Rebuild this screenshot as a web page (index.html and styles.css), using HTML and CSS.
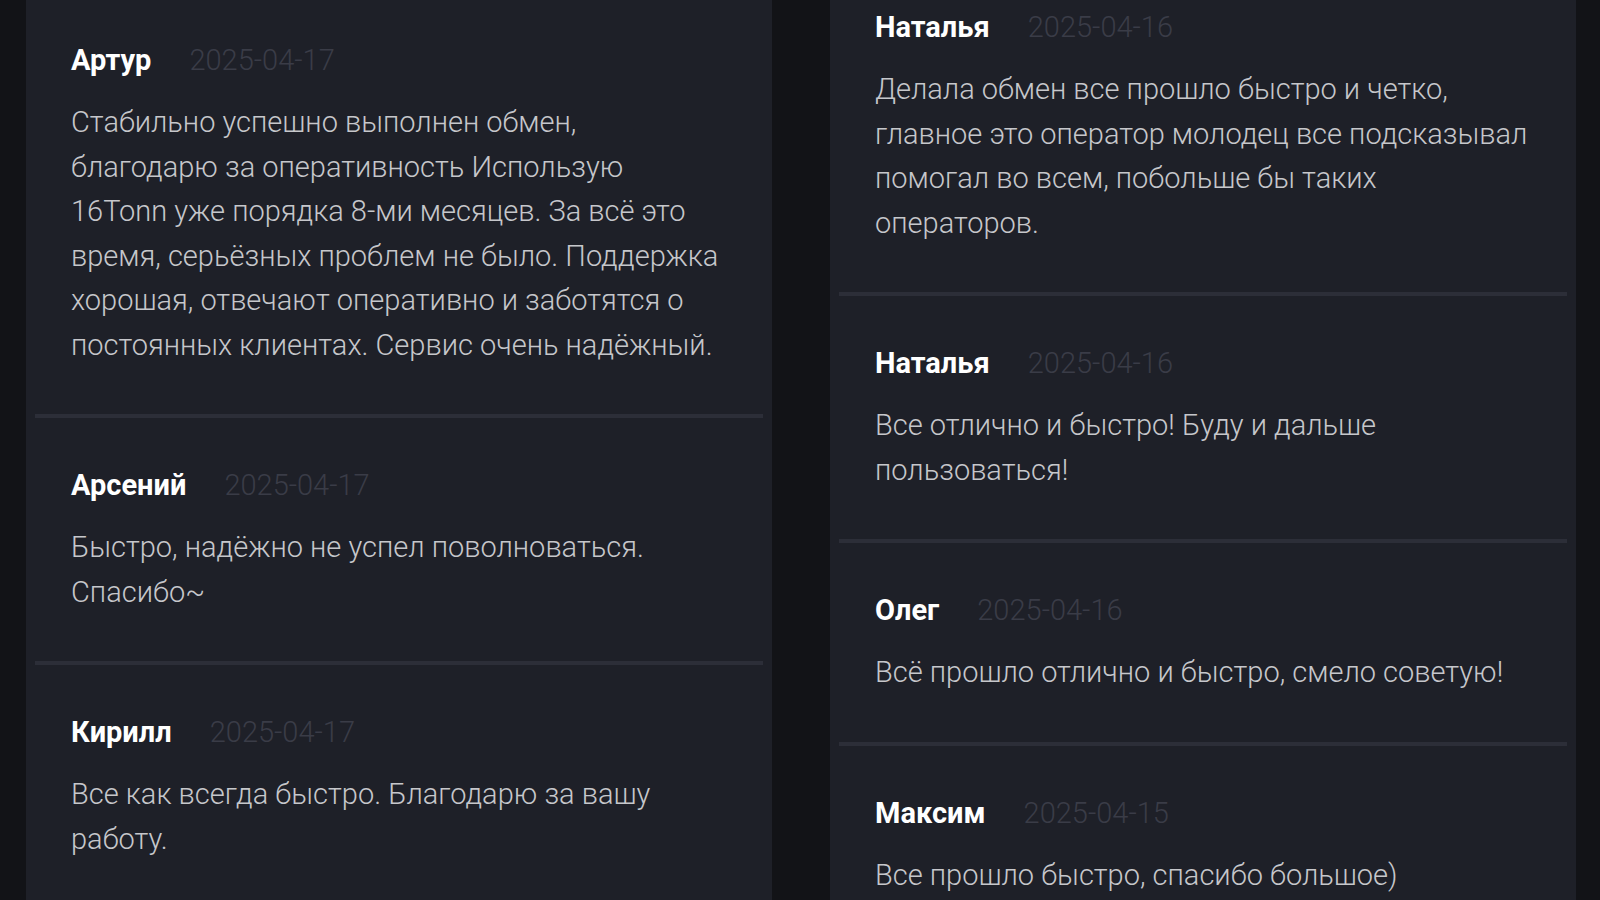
FILE: index.html
```html
<!DOCTYPE html>
<html lang="ru">
<head>
  <meta charset="UTF-8" />
  <meta name="viewport" content="width=device-width, initial-scale=1.0" />
  <title>Отзывы</title>
  <link rel="stylesheet" href="styles.css">
</head>
<body>
  <div class="reviews">
    <div class="column">
      <div class="list list-left">
        <div class="review">
          <div class="head"><span class="name">Артур</span><span class="date">2025-04-17</span></div>
          <p class="text">Стабильно успешно выполнен обмен, благодарю за оперативность Использую 16Tonn уже порядка 8-ми месяцев. За всё это время, серьёзных проблем не было. Поддержка хорошая, отвечают оперативно и заботятся о постоянных клиентах. Сервис очень надёжный.</p>
        </div>
        <div class="review">
          <div class="head"><span class="name">Арсений</span><span class="date">2025-04-17</span></div>
          <p class="text">Быстро, надёжно не успел поволноваться. Спасибо~</p>
        </div>
        <div class="review">
          <div class="head"><span class="name">Кирилл</span><span class="date">2025-04-17</span></div>
          <p class="text">Все как всегда быстро. Благодарю за вашу работу.</p>
        </div>
      </div>
    </div>
    <div class="column">
      <div class="list list-right">
        <div class="review">
          <div class="head"><span class="name">Наталья</span><span class="date">2025-04-16</span></div>
          <p class="text">Делала обмен все прошло быстро и четко, главное это оператор молодец все подсказывал помогал во всем, побольше бы таких операторов.</p>
        </div>
        <div class="review">
          <div class="head"><span class="name">Наталья</span><span class="date">2025-04-16</span></div>
          <p class="text">Все отлично и быстро! Буду и дальше пользоваться!</p>
        </div>
        <div class="review">
          <div class="head"><span class="name">Олег</span><span class="date">2025-04-16</span></div>
          <p class="text">Всё прошло отлично и быстро, смело советую!</p>
        </div>
        <div class="review">
          <div class="head"><span class="name">Максим</span><span class="date">2025-04-15</span></div>
          <p class="text">Все прошло быстро, спасибо большое)</p>
        </div>
      </div>
    </div>
  </div>
</body>
</html>
```

FILE: styles.css
```css
html, body {
  height: 100%;
}
body {
  margin: 0;
  background: #121317;
  font-family: 'Roboto', 'Liberation Sans', sans-serif;
  overflow: hidden;
}
.reviews {
  display: grid;
  grid-template-columns: 746px 746px;
  column-gap: 58px;
  padding: 0 24px 0 26px;
  height: 100%;
}
.column {
  background: #1e2028;
  padding: 0 9px;
  overflow: hidden;
}
.list-left {
  margin-top: -7px;
}
.list-right {
  margin-top: -40px;
}
.review {
  padding: 45px 39px 47px 36px;
  border-bottom: 4px solid #2c2e38;
}
.head {
  display: flex;
  align-items: center;
  height: 44px;
  margin-bottom: 18px;
}
.name {
  font-size: 29px;
  font-weight: 700;
  color: #ffffff;
}
.date {
  margin-left: 38px;
  font-size: 29px;
  font-weight: 300;
  color: #3a3c47;
}
.text {
  margin: 0;
  font-size: 29px;
  font-weight: 300;
  line-height: 44.5px;
  color: #c6c7cb;
}
```
